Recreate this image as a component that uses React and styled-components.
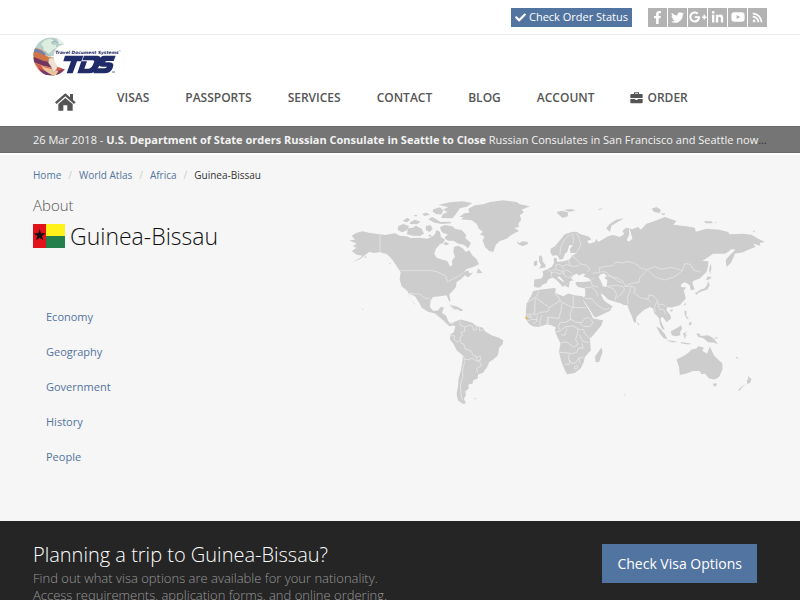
import React from 'react';
import styled, { createGlobalStyle } from 'styled-components';
import { FaCheck, FaFacebookF, FaTwitter, FaGooglePlusG, FaLinkedinIn, FaYoutube, FaRss } from 'react-icons/fa';

const GlobalStyle = createGlobalStyle`
  * { box-sizing: border-box; }
  body { margin: 0; background: #252525; color: #333; font-family: 'Open Sans', sans-serif; font-size: 11px; line-height: 18px; }
  a { color: #5274a0; text-decoration: none; }
  h1, h2, p, ul, ol { margin: 0; padding: 0; }
  ul, ol { list-style: none; }
  svg { display: block; }
`;

const Container = styled.div` padding: 0 33px; `;

// --- HEADER ---
const Header = styled.header` background: #fff; `;
const TopBar = styled.div` border-bottom: 1px solid #ececec; `;
const TopBarInner = styled(Container)` display: flex; justify-content: flex-end; align-items: center; gap: 16px; height: 34px; `;
const StatusButton = styled.button`
  display: flex;
  align-items: center;
  gap: 3px;
  height: 19px;
  padding: 0 4px;
  border: 0;
  background: #5274a0;
  color: #fff;
  font: 11px/18px 'Open Sans', sans-serif;
`;
const SocialList = styled.ul` display: flex; gap: 1px; `;
const SocialLink = styled.a`
  display: flex;
  align-items: center;
  justify-content: center;
  width: 19px;
  height: 19px;
  background: #b3b3b3;
  color: #fff;
  font-size: ${({ $size }) => $size || 13}px;
`;
const LogoLink = styled.a` display: block; width: 90px; padding-top: 1px; `;
const Menu = styled.nav` display: flex; align-items: flex-start; gap: 36px; height: 49px; padding: 12px 22px 0; `;
const MenuLink = styled.a`
  display: flex;
  align-items: center;
  gap: 4px;
  color: #555;
  font-size: 12px;
  font-weight: 600;
  white-space: nowrap;
`;
const HomeLink = styled.a` padding: 3px 5px 0 0; color: #555; `;

// --- NEWS TICKER ---
const Ticker = styled.div` background: #757575; color: #f3f3f3; border-top: 1px solid #6b6b6b; border-bottom: 1px solid #6b6b6b; `;
const TickerText = styled.p`
  height: 25px;
  line-height: 25px;
  overflow: hidden;
  white-space: nowrap;
  text-overflow: ellipsis;
  color: #333;
`;
const TickerLink = styled.a` color: #f3f3f3; `;

// --- CONTENT ---
const Main = styled.main` background: #f6f6f6; border-top: 2px solid #fff; padding-bottom: 47px; `;
const Breadcrumb = styled.ol` display: flex; padding-top: 11px; font-size: 10px; `;
const Crumb = styled.li`
  & + &::before { content: '/'; padding: 0 7px; color: #ccc; }
`;
const Columns = styled.div` display: grid; grid-template-columns: 42fr 58fr; `;
const About = styled.p` padding-top: 11px; font-size: 15px; font-weight: 300; line-height: 20px; color: #555; `;
const Title = styled.h1`
  display: flex;
  align-items: center;
  gap: 5px;
  padding-top: 5px;
  font-size: 23px;
  font-weight: 300;
  line-height: 32px;
  color: #111;
`;
const TopicList = styled.ul` padding: 47px 13px 0; `;
const Topic = styled.li` height: 35px; line-height: 35px; `;
const MapBox = styled.div` padding: 14px 0 0 8px; `;

// --- CALL TO ACTION ---
const Footer = styled.footer` background: #252525; `;
const FooterInner = styled(Container)` display: flex; justify-content: space-between; align-items: flex-start; padding-top: 19px; padding-bottom: 20px; `;
const FooterTitle = styled.h2` color: #fff; font-size: 20px; font-weight: 300; line-height: 30px; `;
const FooterText = styled.p` color: #999; font-size: 13px; font-weight: 300; line-height: 17px; `;
const VisaButton = styled.button`
  height: 39px;
  margin: 4px 10px 0 0;
  padding: 0 15px;
  border: 0;
  background: #5274a0;
  color: #fff;
  font: 14px/20px 'Open Sans', sans-serif;
`;

const Logo = () => (
  <svg width="90" height="41" viewBox="0 0 270 123" role="img" aria-label="Travel Document Systems">
    <defs>
      <clipPath id="globe"><path d="M94 25C80 2 44-3 22 16C-7 41-5 85 23 108C47 127 84 118 97 98C76 99 61 82 62 62C62 42 74 28 94 25Z" /></clipPath>
    </defs>
    <g clipPath="url(#globe)">
      <path fill="#b8d1ce" d="M0 0h110v60H0z" />
      <path fill="#deb27f" d="M0 34L28 40 44 61 72 66 72 120 0 120Z" />
      <path fill="#777eaa" d="M0 36C12 38 28 40 38 54L35 66C20 60 8 58 0 61Z" />
      <path fill="#d27545" d="M0 49C17 44 27 57 51 65L51 78C30 75 17 70 0 67Z" />
      <path fill="#70365f" d="M0 64C19 66 28 79 59 77L73 95C42 94 22 87 0 77Z" />
      <path fill="#d85849" d="M4 79C25 93 50 98 80 93L99 102 74 121 24 108Z" />
      <path fill="#743c6e" d="M15 95C36 109 62 111 95 98L76 120 35 119Z" />
      <path fill="#edc698" d="M25 89C41 98 56 97 76 106L67 120C48 113 32 105 25 89Z" />
      <path fill="#dceee0" stroke="#91aaa3" d="M23 25L34 12 52 6 65 14 56 19 58 25 69 25 73 36 59 42 54 50 43 55 40 49 29 45 31 35Z" />
      <path fill="#eee2d1" stroke="#a89099" d="M48 67L61 66 72 72 83 79 75 87 70 101 60 109 55 93 46 80Z" />
      <path fill="#e9f3eb" stroke="#aeb8b0" d="M69 8L83 10 99 25 92 35 87 24 77 26 76 17Z" />
      <path fill="none" stroke="#667e7a" strokeWidth="1" d="M29 43L39 48 44 57 54 62M56 19L67 15 74 22" />
    </g>
    <text x="67" y="54" fill="#252c69" fontFamily="DejaVu Sans, sans-serif" fontSize="13" fontWeight="700" fontStyle="italic">Travel Document Systems</text>
    <text x="257" y="49" fill="#252c69" fontSize="7">®</text>
    <g fill="#202b69" fillRule="evenodd">
      <path d="M96 59H151L145 76H132L119 112H101L114 76H91Z" />
      <path d="M153 59H193Q208 60 202 80Q193 112 166 112H133L145 76H162L154 98H166Q177 98 183 79Q186 73 178 73H148Z" />
      <path d="M214 59H248L242 75H223Q217 75 216 79H229Q246 80 239 96Q233 112 214 112H181L187 97H214Q220 97 222 92H208Q191 92 197 75Q202 59 214 59Z" />
    </g>
    <path fill="#202b69" d="M237 107h9v2h-9z" />
  </svg>
);

const HomeIcon = () => (
  <svg width="21" height="19" viewBox="0 0 63 57" fill="currentColor" role="img" aria-label="Home">
    <path d="M31 4L0 31L5 36L31 13L57 36L62 31L54 24V6H45V16Z" />
    <path d="M31 18L10 36V56H25V40H37V56H53V36Z" />
  </svg>
);

const BriefcaseIcon = () => (
  <svg width="13" height="12" viewBox="0 0 39 36" fill="currentColor" aria-hidden="true">
    <path fillRule="evenodd" d="M12 6V1H27V6H35Q38 6 38 9V18H1V9Q1 6 4 6ZM15 6H24V4H15Z" />
    <path d="M1 21H16V24H23V21H38V31Q38 34 35 34H4Q1 34 1 31Z" />
  </svg>
);

const Flag = () => (
  <svg width="32" height="24" viewBox="0 0 96 72" role="img" aria-label="Flag of Guinea-Bissau">
    <path fill="#e11219" d="M0 0h40v72H0z" />
    <path fill="#fff21a" d="M39 0h57v36H39z" />
    <path fill="#23804b" d="M39 36h57v36H39z" />
    <path fill="#111" d="M20 15l4 13h14L27 36l4 13-11-8-11 8 4-13L2 28h14z" />
  </svg>
);

const WorldMap = () => (
  <svg width="100%" viewBox="12 8 1254 630" fill="#cdcdcd" role="img" aria-label="World map">
    {/* north america and the arctic islands */}
    <g transform="translate(-15 -15)">
      <path d="M28 150L45 148 35 136 50 127 68 123 90 128 120 132 135 134 165 129 180 136 200 138 212 143 240 142 262 145 275 140 285 132 290 118 300 125 303 140 315 148 310 158 300 162 288 175 283 190 290 202 308 208 322 212 330 228 337 226 336 212 345 200 340 185 342 170 355 166 370 175 377 185 388 180 397 195 410 207 417 222 400 230 380 236 372 245 385 240 388 250 400 246 385 262 375 255 362 268 350 275 348 290 338 302 328 312 332 335 326 330 320 315 300 318 280 320 272 330 270 350 280 362 295 360 302 350 312 352 306 368 318 376 325 392 332 402 348 400 360 405 355 410 342 406 328 408 312 392 300 382 285 370 262 364 245 352 238 338 225 318 207 310 212 325 228 345 222 340 210 320 203 303 185 288 179 268 182 245 170 228 160 212 150 200 140 192 118 186 100 188 88 184 75 195 60 207 38 215 60 203 68 196 50 193 35 182 50 172 38 168 50 160Z" />
      <path d="M175 107L190 101 207 107 202 119 187 126 173 119ZM204 114L218 112 228 106 245 115 252 130 240 137 218 136 201 132ZM188 92L202 82 211 88 200 96ZM211 95L225 88 242 94 231 102 210 101ZM220 74L232 73 229 79ZM247 70L260 67 270 73 253 77ZM265 87L277 80 291 88 302 95 331 94 334 99 305 101 284 97ZM258 107L272 104 278 115 270 125 258 120ZM280 57L300 51 310 60 305 72 290 72 278 64ZM295 44L330 36 367 33 397 38 380 49 360 54 350 68 338 84 304 83 308 72 323 65 309 58 325 50ZM300 111L315 104 337 108 347 116 365 119 379 134 376 143 393 158 385 174 371 163 356 160 340 151 324 151 313 143 324 132 310 129 304 122ZM316 154L328 160 320 165 310 162ZM415 234L428 248 410 249ZM67 355L72 358 66 358ZM74 197L80 200 76 204ZM147 216L153 221 149 221ZM328 343L350 349 370 359 362 363 347 354ZM269 132L278 139 265 138Z" />
      <path fill="none" stroke="#ececec" strokeWidth="2" d="M120 132V186L145 194M182 241H275L293 245 318 258 323 274 338 267 356 257 370 248M207 309L240 312 254 323 269 325" />
    </g>
    {/* south america */}
    <g transform="translate(255 285)">
      <path d="M42 83L43 91 58 98 70 97 78 93 92 88 110 92 128 98 140 108 158 112 166 124 185 135 205 142 220 150 218 162 208 172 204 195 190 208 178 215 172 230 158 248 145 252 143 265 130 270 128 280 115 283 117 295 106 303 108 315 102 325 108 340 98 341 84 330 80 312 84 290 86 265 93 240 98 210 98 195 80 180 70 160 60 148 62 132 72 125 76 108 70 100 55 100 42 90ZM58 46L71 50 82 57 74 58ZM90 57L99 59 94 62ZM132 324L142 325 133 327Z" />
      <path fill="none" stroke="#efefef" strokeWidth="2" d="M90 92L91 105 105 110 104 124 93 127 98 136 91 139V152M62 135L74 137 72 148 82 155 91 151M105 110L116 105 128 108 131 120 139 118 140 109M149 111L148 120 160 120M91 158L102 162 105 176 123 182 129 194 139 200 141 211 150 215 155 226 140 235 143 248M98 194L104 208 115 208 128 204 140 214M105 211L98 238 99 260 91 285 94 318 98 330M139 200L151 198 153 209 141 211" />
    </g>
    {/* greenland, europe and asia */}
    <g transform="translate(405 -15)">
      <path d="M-62 80L-47 69 -32 67 -35 55 -15 45 10 42 30 35 70 30 110 35 120 42 150 48 125 58 132 66 120 75 124 88 115 101 118 109 103 113 118 122 100 130 80 145 60 152 48 163 40 185 28 182 15 170 8 150 14 139 0 132 9 125 -3 115 -10 100 -25 90 -57 87 -49 80ZM112 153L118 159 127 153 142 154 145 160 128 168 113 160ZM178 198L183 194 188 203 188 213 197 224 197 231 177 235 184 225 177 212ZM162 214L172 211 172 225 162 228ZM230 65L245 61 264 66 264 78 248 83 235 72ZM252 58L275 56 287 61 266 64ZM379 114L390 101 409 88 432 84 410 97 395 106 390 125ZM515 55L530 50 543 58 540 68 523 65ZM542 70L556 68 553 75ZM672 93L695 93 699 99 678 99ZM702 96L713 97 708 99ZM818 121L828 122 821 125ZM355 56L370 54 360 59Z" />
      <path d="M212 175L225 168 240 150 255 132 275 125 290 124 302 132 325 138 335 147 322 152 328 160 345 155 350 145 355 155 372 145 385 138 400 134 420 140 433 132 428 121 439 112 448 114 448 133 441 148 446 154 458 145 453 127 449 114 457 117 475 110 483 118 500 100 525 92 555 80 590 92 580 103 620 108 645 112 648 124 680 115 720 118 745 125 750 132 790 130 815 133 835 145 855 155 840 158 842 166 820 160 828 170 805 178 790 186 765 190 762 200 752 220 740 230 738 208 750 195 767 178 755 176 745 185 735 190 700 190 687 199 668 212 686 213 685 228 680 245 660 265 640 272 638 280 645 298 633 300 630 285 622 280 615 276 605 281 603 290 620 292 612 300 618 325 600 345 575 352 562 350 560 360 572 375 574 385 560 396 557 391 550 382 545 380 542 388 548 405 555 418 549 418 540 400 538 385 530 375 523 369 520 355 510 350 495 358 480 370 470 380 468 398 462 395 455 375 450 365 443 345 432 344 420 338 400 333 385 328 372 315 362 309 370 328 380 337 398 348 390 362 348 382 342 378 328 355 312 332 308 322 316 318 316 295 295 290 287 281 288 273 285 270 270 272 267 292 257 288 250 270 238 258 232 262 250 275 260 282 248 290 240 280 228 268 218 262 205 268 200 279 190 282 180 292 168 292 162 288 163 268 185 265 190 255 188 243 200 238 215 230 222 220 222 203 230 203 232 215 250 213 268 208 278 195 292 188 272 188 270 175 280 165 268 165 262 185 255 190 250 205 240 208 232 195 218 196 212 188Z" />
      <path fill="#f6f6f6" d="M272 263L289 250 298 256 310 250 317 252 310 258 329 265 332 273 310 275 288 275ZM361 253L372 250 381 256 374 263 383 270 380 290 369 288 362 270 356 261Z" />
      <path fill="none" stroke="#ececec" strokeWidth="2" d="M274 127L280 139 281 159M269 133L253 149 243 170 240 193M288 128L298 142 303 166 290 186M273 193L290 207 302 221 320 225 330 236 322 246M225 225L238 222 247 228 262 223 280 229 300 225M202 237L215 245 214 259M228 225L229 239 214 239M231 239L250 244 260 239 277 249M247 228L251 239M213 248L225 245 237 250 252 248M250 244L256 258 267 262 284 252M266 211L271 227M341 264L333 270 337 286 354 290M315 292L334 290 348 301 355 318M338 249L360 247 357 233 379 228 399 226 409 215 430 218 440 213 465 219 484 234 503 238M363 244L380 246 392 260 412 263 429 273 437 287 450 280 477 276 480 262 502 240M503 238L524 229 545 237 574 231 608 241 597 250 580 261 554 269 525 260 506 242M608 240L615 220 632 222 641 239 661 245M382 260L389 254 413 272 426 278M384 288L411 285 429 289 434 297 427 309 409 324M381 288L403 297 410 312 405 332M433 289L454 287 450 304 443 319 445 342M454 286L467 295 462 307 483 323 504 327 514 337M504 327L507 314 521 317 531 328 537 343 551 342 558 350M532 334L524 348 527 367M535 344L540 358 552 358 557 372M315 324L336 326 350 342 372 358 390 355" />
    </g>
    {/* africa */}
    <g transform="translate(495 225)">
      <path d="M70 62L95 58 132 53 138 55 136 68 160 78 175 70 195 75 218 78 222 95 238 120 250 145 280 150 275 165 250 195 240 205 243 240 225 260 222 275 212 295 195 308 172 312 165 300 155 275 147 245 152 220 140 195 135 180 138 172 125 165 110 163 85 170 68 168 55 158 47 145 48 125 50 100 62 80ZM275 232L278 245 268 275 257 276 256 258 265 245ZM342 373L349 374 343 376Z" />
      <path fill="none" stroke="#eeeeee" strokeWidth="2" d="M87 62L80 78 51 98M76 84L74 131 50 133M79 84L119 112 151 91 145 78 134 70M151 91L158 96 190 114M190 75V112H228M157 97L153 121 147 145 115 140 115 165M119 112L114 124 93 126 74 135M187 114L181 130 182 147 166 157 151 157 145 171 152 183 138 184M114 139L111 164M97 135L90 151 91 169M82 137L81 153 69 161M60 135L66 148 82 147M49 140L64 139M52 153L62 149M181 147L198 156 216 157 224 145 236 141 251 157 239 169 220 169 211 158M152 179L170 169 190 167 205 176 202 194 197 207 205 222 191 231 173 216 153 216M154 193L165 195 171 175M205 178L222 178 223 188 240 205M207 193L213 200 217 213 236 217M146 246L179 249 176 268 186 280 198 277 207 264 221 261M179 249L188 250 201 246 207 233 220 234 216 219M164 282L178 282 181 272 176 269M207 264L211 280M193 290L201 285 204 292 195 297Z" />
      <path fill="#e7b75b" d="M46 139l8 2-1 5-4 1-3-4z" />
    </g>
    {/* japan, south east asia and oceania */}
    <g transform="translate(855 255)">
      <path d="M140 238L160 228 175 218 185 208 200 205 205 198 222 202 218 212 232 220 238 205 240 198 248 215 252 225 265 238 278 250 278 268 268 290 255 298 238 295 225 280 215 282 210 272 190 272 170 280 150 284 148 262ZM249 310L262 310 257 320 251 316ZM354 287L365 296 362 307 353 312 351 300 356 297ZM350 310L338 321 327 333 326 327ZM79 138L91 145 106 163 113 177 102 174 91 161ZM109 179L132 182 143 186 126 186ZM123 153L139 145 154 135 157 145 151 155 152 165 138 168 126 165ZM160 158L175 154 165 160 173 165 166 166 169 175 163 172ZM164 90L171 94 169 105 177 117 172 116 165 104ZM177 129L185 123 184 136 178 134ZM199 160L209 160 213 167 235 165 251 174 265 192 251 187 235 186 221 174 206 170ZM89 129L96 130 104 149 96 143ZM22 125L29 132 25 136ZM163 72L169 67 166 78ZM251 174L261 170 264 175ZM152 185L184 190 178 193 155 190ZM318 229L329 235 319 234ZM367 218L362 221Z" />
      <path d="M234 -12L246 -9 238 -2 229 0ZM235 2L240 14 233 28 216 33 203 40 198 38 213 28 225 24 232 15ZM242 -50L245 -38 241 -18 238 -30ZM197 36L204 38 201 44 197 41ZM122 89L130 86 127 94 122 94Z" />
    </g>
  </svg>
);

const menuItems = ['Visas', 'Passports', 'Services', 'Contact', 'Blog', 'Account'];
const topics = ['Economy', 'Geography', 'Government', 'History', 'People'];
const socials = [
  { name: 'Facebook', Icon: FaFacebookF },
  { name: 'Twitter', Icon: FaTwitter },
  { name: 'Google Plus', Icon: FaGooglePlusG, size: 18 },
  { name: 'LinkedIn', Icon: FaLinkedinIn },
  { name: 'YouTube', Icon: FaYoutube, size: 14 },
  { name: 'RSS', Icon: FaRss, size: 11 },
];

const App = () => (
  <>
    <GlobalStyle />
    <Header>
      <TopBar>
        <TopBarInner>
          <StatusButton><FaCheck size={11} />Check Order Status</StatusButton>
          <SocialList>
            {socials.map(({ name, Icon, size }) => (
              <li key={name}><SocialLink href="#" aria-label={name} $size={size}><Icon /></SocialLink></li>
            ))}
          </SocialList>
        </TopBarInner>
      </TopBar>
      <Container>
        <LogoLink href="#"><Logo /></LogoLink>
        <Menu>
          <HomeLink href="#"><HomeIcon /></HomeLink>
          {menuItems.map((item) => <MenuLink key={item} href="#">{item.toUpperCase()}</MenuLink>)}
          <MenuLink href="#"><BriefcaseIcon />ORDER</MenuLink>
        </Menu>
      </Container>
    </Header>

    <Ticker>
      <Container>
        <TickerText>
          <TickerLink href="#">26 Mar 2018 - <strong>U.S. Department of State orders Russian Consulate in Seattle to Close</strong> Russian Consulates in San Francisco and Seattle now </TickerLink>...
        </TickerText>
      </Container>
    </Ticker>

    <Main>
      <Container>
        <Breadcrumb>
          <Crumb><a href="#">Home</a></Crumb>
          <Crumb><a href="#">World Atlas</a></Crumb>
          <Crumb><a href="#">Africa</a></Crumb>
          <Crumb>Guinea-Bissau</Crumb>
        </Breadcrumb>
        <Columns>
          <div>
            <About>About</About>
            <Title><Flag />Guinea-Bissau</Title>
            <TopicList>
              {topics.map((topic) => <Topic key={topic}><a href="#">{topic}</a></Topic>)}
            </TopicList>
          </div>
          <MapBox><WorldMap /></MapBox>
        </Columns>
      </Container>
    </Main>

    <Footer>
      <FooterInner>
        <div>
          <FooterTitle>Planning a trip to Guinea-Bissau?</FooterTitle>
          <FooterText>Find out what visa options are available for your nationality.<br />Access requirements, application forms, and online ordering.</FooterText>
        </div>
        <VisaButton>Check Visa Options</VisaButton>
      </FooterInner>
    </Footer>
  </>
);

export default App;
